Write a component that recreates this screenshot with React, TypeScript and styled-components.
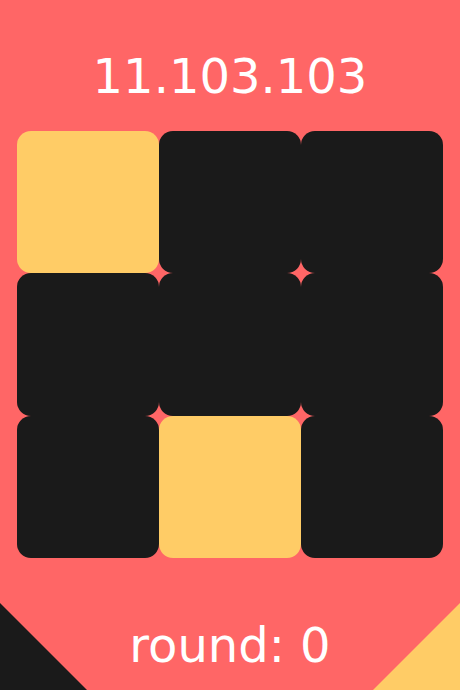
import React from "react";
import styled, { createGlobalStyle } from "styled-components";

const GlobalStyle = createGlobalStyle`
  html, body {
    margin: 0;
    padding: 0;
    background: #ff6666;
  }
  body {
    font-family: "DejaVu Sans", Verdana, sans-serif;
  }
`;

const tiles = [true, false, false, false, false, false, false, true, false];

const App = () => {
  return (
    <Page>
      <GlobalStyle />
      <Score>11.103.103</Score>
      <Board>
        {tiles.map((lit, i) => (
          <Tile key={i} $lit={lit} />
        ))}
      </Board>
      <Round>round: 0</Round>
      <Corner $side="left" />
      <Corner $side="right" />
    </Page>
  );
};

const Page = styled.div`
  position: relative;
  width: 460px;
  height: 690px;
  overflow: hidden;
  background: #ff6666;
  display: flex;
  flex-direction: column;
  align-items: center;
  padding-top: 48px;
  box-sizing: border-box;
`;

const Score = styled.div`
  color: #fff;
  font-size: 48px;
  line-height: 56px;
`;

const Board = styled.div`
  margin-top: 27px;
  width: 427px;
  display: grid;
  grid-template-columns: repeat(3, 1fr);
`;

const Tile = styled.div<{ $lit: boolean }>`
  aspect-ratio: 1;
  border-radius: 14px;
  background: ${(p) => (p.$lit ? "#ffcc66" : "#1a1a1a")};
`;

const Round = styled.div`
  margin-top: 59px;
  color: #fff;
  font-size: 48px;
  line-height: 56px;
`;

const Corner = styled.div<{ $side: "left" | "right" }>`
  position: absolute;
  bottom: 0;
  width: 87px;
  height: 87px;
  ${(p) =>
    p.$side === "left"
      ? `left: 0; background: #1a1a1a; clip-path: polygon(0 0, 100% 100%, 0 100%);`
      : `right: 0; background: #ffcc66; clip-path: polygon(100% 0, 100% 100%, 0 100%);`}
`;

export default App;
